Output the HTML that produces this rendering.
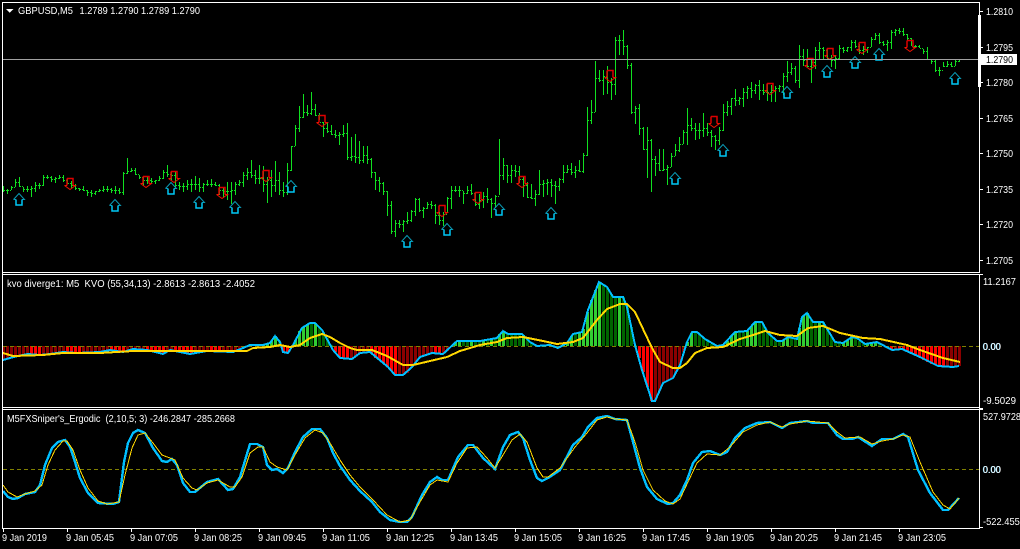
<!DOCTYPE html>
<html>
<head>
<meta charset="utf-8">
<title>GBPUSD,M5</title>
<style>
html,body{margin:0;padding:0;background:#000;width:1020px;height:549px;overflow:hidden}
svg{display:block}
text{font-family:"Liberation Sans",sans-serif;font-size:10.5px;fill:#fff;white-space:pre}
.c{shape-rendering:crispEdges;fill:none}
</style>
</head>
<body>
<svg width="1020" height="549" viewBox="0 0 1020 549" xmlns="http://www.w3.org/2000/svg">
<defs>
<g id="u" fill="none"><path d="M-5.5 6.5L0 .5 5.5 6.5H3M-5.5 6.5H-3" stroke="#0a9ab5"/><path d="M-3 6.5V12H3V6.5" stroke="#00c8f5" stroke-width="1.5"/></g>
<g id="d" fill="none"><path d="M-3 .5H3V7.5M-3 .5V7.5" stroke="#dd0000" stroke-width="1.5"/><path d="M-5.5 7.5H-3M3 7.5H5.5L0 11.5-5.5 7.5" stroke="#ee1100"/></g>
</defs>

<!-- main price bars -->
<path class="c" stroke="#10e020" d="M3.5 186V192M7.5 189V194M11.5 186V190M15.5 179V187M19.5 177V187M23.5 187V192M27.5 186V192M31.5 186V197M35.5 182V192M39.5 183V189M43.5 175V186M47.5 175V179M51.5 176V182M55.5 177V183M59.5 175V179M63.5 175V182M67.5 178V184M71.5 181V188M75.5 184V190M79.5 188V191M83.5 186V191M87.5 190V196M91.5 190V197M95.5 191V195M99.5 189V192M103.5 186V192M107.5 186V192M111.5 188V193M115.5 186V194M119.5 188V194M123.5 172V195M127.5 158V174M131.5 168V172M135.5 168V175M139.5 175V179M143.5 176V186M147.5 176V184M151.5 178V184M155.5 180V184M159.5 176V181M163.5 170V179M167.5 165V177M171.5 172V180M175.5 172V187M179.5 182V190M183.5 183V192M187.5 180V190M191.5 179V192M195.5 176V190M199.5 178V192M203.5 183V192M207.5 180V186M211.5 179V187M215.5 182V186M219.5 184V195M223.5 188V198M227.5 182V200M231.5 182V204M235.5 182V195M239.5 180V186M243.5 172V187M247.5 168V180M251.5 160V178M255.5 170V184M259.5 165V184M263.5 166V192M267.5 177V203M271.5 170V197M275.5 161V192M279.5 172V195M283.5 182V197M287.5 163V195M291.5 146V171M295.5 125V146M299.5 106V132M303.5 94V118M307.5 105V116M311.5 92V115M315.5 104V116M319.5 113V120M323.5 122V137M327.5 122V133M331.5 125V135M335.5 130V138M339.5 132V145M343.5 125V137M347.5 123V160M351.5 137V161M355.5 134V163M359.5 141V164M363.5 146V163M367.5 146V164M371.5 158V178M375.5 172V190M379.5 177V192M383.5 182V195M387.5 191V216M391.5 201V234M395.5 220V237M399.5 220V228M403.5 220V232M407.5 212V224M411.5 210V222M415.5 198V216M419.5 198V212M423.5 207V218M427.5 202V209M431.5 201V209M435.5 204V224M439.5 212V225M443.5 212V226M447.5 197V213M451.5 186V209M455.5 186V192M459.5 186V197M463.5 191V204M467.5 186V194M471.5 184V195M475.5 193V206M479.5 194V209M483.5 192V208M487.5 188V203M491.5 198V218M495.5 195V208M499.5 139V195M503.5 158V180M507.5 165V183M511.5 165V183M515.5 165V177M519.5 166V183M523.5 177V197M527.5 182V198M531.5 184V199M535.5 190V206M539.5 170V195M543.5 180V197M547.5 179V195M551.5 179V197M555.5 181V204M559.5 178V191M563.5 165V183M567.5 165V173M571.5 163V175M575.5 166V178M579.5 160V172M583.5 153V173M587.5 107V156M591.5 100V124M595.5 61V112M599.5 70V82M603.5 70V95M607.5 66V94M611.5 78V100M615.5 37V95M619.5 35V55M623.5 30V55M627.5 45V69M631.5 63V114M635.5 106V124M639.5 104V135M643.5 127V150M647.5 127V178M651.5 139V192M655.5 156V176M659.5 149V171M663.5 149V171M667.5 165V185M671.5 153V167M675.5 144V156M679.5 137V152M683.5 130V144M687.5 108V145M691.5 118V131M695.5 123V140M699.5 123V139M703.5 113V137M707.5 123V136M711.5 130V147M715.5 135V150M719.5 127V145M723.5 104V131M727.5 101V116M731.5 98V115M735.5 89V106M739.5 97V105M743.5 88V107M747.5 86V99M751.5 82V98M755.5 84V94M759.5 80V100M763.5 84V95M767.5 84V101M771.5 85V102M775.5 86V102M779.5 85V92M783.5 73V95M787.5 61V82M791.5 63V75M795.5 66V83M799.5 45V88M803.5 49V66M807.5 49V67M811.5 58V83M815.5 47V69M819.5 42V59M823.5 47V59M827.5 48V60M831.5 55V67M835.5 55V69M839.5 45V59M843.5 47V53M847.5 47V52M851.5 40V51M855.5 40V48M859.5 44V54M863.5 46V55M867.5 47V53M871.5 37V47M875.5 33V40M879.5 33V44M883.5 41V46M887.5 40V51M891.5 30V49M895.5 29V36M899.5 28V34M903.5 28V36M907.5 34V40M911.5 38V46M915.5 45V48M919.5 45V48M923.5 49V54M927.5 47V59M931.5 59V64M935.5 60V72M939.5 67V76M943.5 62V67M947.5 61V67M951.5 62V67M955.5 59V66M959.5 59V62"/>
<path class="c" stroke="#10e020" stroke-dasharray="1 1" d="M4 190.5h3M8 190.5h3M12 187.5h3M16 182.5h3M20 186.5h3M24 189.5h3M28 189.5h3M32 188.5h3M36 185.5h3M40 185.5h3M44 177.5h3M48 177.5h3M52 179.5h3M56 178.5h3M60 177.5h3M64 180.5h3M68 183.5h3M72 185.5h3M76 188.5h3M80 189.5h3M84 190.5h3M88 192.5h3M92 193.5h3M96 191.5h3M100 190.5h3M104 189.5h3M108 189.5h3M112 190.5h3M116 190.5h3M120 192.5h3M124 173.5h3M128 171.5h3M132 170.5h3M136 174.5h3M140 177.5h3M144 180.5h3M148 180.5h3M152 181.5h3M156 180.5h3M160 178.5h3M164 172.5h3M168 174.5h3M172 175.5h3M176 185.5h3M180 186.5h3M184 186.5h3M188 184.5h3M192 184.5h3M196 184.5h3M200 187.5h3M204 184.5h3M208 184.5h3M212 184.5h3M216 185.5h3M220 190.5h3M224 191.5h3M228 191.5h3M232 190.5h3M236 184.5h3M240 182.5h3M244 175.5h3M248 172.5h3M252 175.5h3M256 178.5h3M260 178.5h3M264 184.5h3M268 180.5h3M272 185.5h3M276 180.5h3M280 190.5h3M284 192.5h3M288 170.5h3M292 146.5h3M296 128.5h3M300 117.5h3M304 112.5h3M308 113.5h3M312 109.5h3M316 115.5h3M320 122.5h3M324 128.5h3M328 131.5h3M332 134.5h3M336 135.5h3M340 134.5h3M344 133.5h3M348 157.5h3M352 156.5h3M356 157.5h3M360 160.5h3M364 155.5h3M368 159.5h3M372 172.5h3M376 180.5h3M380 183.5h3M384 191.5h3M388 205.5h3M392 231.5h3M396 223.5h3M400 224.5h3M404 221.5h3M408 220.5h3M412 211.5h3M416 199.5h3M420 210.5h3M424 208.5h3M428 204.5h3M432 205.5h3M436 215.5h3M440 220.5h3M444 214.5h3M448 198.5h3M452 190.5h3M456 190.5h3M460 190.5h3M464 193.5h3M468 190.5h3M472 193.5h3M476 204.5h3M480 200.5h3M484 196.5h3M488 199.5h3M492 203.5h3M496 196.5h3M500 175.5h3M504 165.5h3M508 175.5h3M512 170.5h3M516 171.5h3M520 179.5h3M524 185.5h3M528 197.5h3M532 198.5h3M536 194.5h3M540 184.5h3M544 183.5h3M548 182.5h3M552 185.5h3M556 186.5h3M560 179.5h3M564 172.5h3M568 169.5h3M572 172.5h3M576 170.5h3M580 171.5h3M584 155.5h3M588 120.5h3M592 112.5h3M596 78.5h3M600 80.5h3M604 76.5h3M608 82.5h3M612 84.5h3M616 40.5h3M620 40.5h3M624 46.5h3M628 65.5h3M632 112.5h3M636 108.5h3M640 128.5h3M644 149.5h3M648 140.5h3M652 159.5h3M656 163.5h3M660 170.5h3M664 169.5h3M668 167.5h3M672 156.5h3M676 150.5h3M680 144.5h3M684 132.5h3M688 125.5h3M692 128.5h3M696 130.5h3M700 130.5h3M704 128.5h3M708 132.5h3M712 136.5h3M716 140.5h3M720 130.5h3M724 112.5h3M728 106.5h3M732 98.5h3M736 100.5h3M740 98.5h3M744 92.5h3M748 88.5h3M752 90.5h3M756 85.5h3M760 90.5h3M764 92.5h3M768 92.5h3M772 90.5h3M776 88.5h3M780 86.5h3M784 76.5h3M788 72.5h3M792 68.5h3M796 80.5h3M800 56.5h3M804 60.5h3M808 66.5h3M812 62.5h3M816 50.5h3M820 48.5h3M824 50.5h3M828 58.5h3M832 60.5h3M836 58.5h3M840 48.5h3M844 50.5h3M848 47.5h3M852 42.5h3M856 46.5h3M860 50.5h3M864 49.5h3M868 47.5h3M872 39.5h3M876 35.5h3M880 42.5h3M884 44.5h3M888 42.5h3M892 32.5h3M896 30.5h3M900 31.5h3M904 34.5h3M908 38.5h3M912 46.5h3M916 46.5h3M920 48.5h3M924 51.5h3M928 59.5h3M932 61.5h3M936 70.5h3M940 70.5h3M944 66.5h3M948 64.5h3M952 66.5h3M956 61.5h3"/>

<!-- arrows -->
<use href="#u" x="19" y="193"/><use href="#u" x="115" y="199"/><use href="#u" x="171" y="182"/><use href="#u" x="199" y="196"/><use href="#u" x="235" y="201"/><use href="#u" x="291" y="180"/><use href="#u" x="407" y="235"/><use href="#u" x="447" y="223"/><use href="#u" x="499" y="203"/><use href="#u" x="551" y="207"/><use href="#u" x="675" y="172"/><use href="#u" x="723" y="144"/><use href="#u" x="787" y="86"/><use href="#u" x="827" y="65"/><use href="#u" x="855" y="56"/><use href="#u" x="879" y="48"/><use href="#u" x="955" y="72"/>
<use href="#d" x="70" y="178"/><use href="#d" x="146" y="176"/><use href="#d" x="174" y="171"/><use href="#d" x="222" y="187"/><use href="#d" x="266" y="170"/><use href="#d" x="322" y="115"/><use href="#d" x="442" y="205"/><use href="#d" x="478" y="192"/><use href="#d" x="522" y="176"/><use href="#d" x="610" y="70"/><use href="#d" x="714" y="116"/><use href="#d" x="770" y="83"/><use href="#d" x="810" y="58"/><use href="#d" x="830" y="48"/><use href="#d" x="862" y="42"/><use href="#d" x="910" y="40"/>

<!-- current price line -->
<path class="c" stroke="#a0a0a0" d="M3 59.5H983"/>

<!-- KVO histogram -->
<g class="c" stroke-width="3">
<path stroke="#8b0000" d="M3.5 346V360M7.5 346V359M11.5 346V358M15.5 346V357M19.5 346V356M23.5 346V355M27.5 346V354M43.5 346V355M47.5 346V354M51.5 346V354M55.5 346V353M59.5 346V352M63.5 346V352M83.5 346V352M87.5 346V352M91.5 346V352M95.5 346V352M99.5 346V352M103.5 346V351M107.5 346V350M127.5 346V350M131.5 346V349M135.5 346V349M139.5 346V349M143.5 346V350M167.5 346V352M171.5 346V350M195.5 346V353M199.5 346V352M203.5 346V351M207.5 346V351M223.5 346V352M227.5 346V352M231.5 346V352M235.5 346V352M239.5 346V349M243.5 346V348M291.5 346V348M351.5 346V359M355.5 346V356M359.5 346V353M363.5 346V352M367.5 346V352M399.5 346V375M403.5 346V375M407.5 346V373M411.5 346V368M415.5 346V362M419.5 346V357M423.5 346V356M427.5 346V354M431.5 346V353M443.5 346V354M447.5 346V351M451.5 346V347M655.5 346V401M659.5 346V391M663.5 346V383M667.5 346V381M671.5 346V379M675.5 346V374M679.5 346V365M683.5 346V352M895.5 346V350M947.5 346V367M951.5 346V367M955.5 346V367M959.5 346V366"/>
<path stroke="#ff0000" d="M31.5 346V354M35.5 346V354M39.5 346V355M67.5 346V353M71.5 346V353M75.5 346V353M79.5 346V353M111.5 346V350M115.5 346V351M119.5 346V352M123.5 346V352M147.5 346V350M151.5 346V351M155.5 346V352M159.5 346V353M163.5 346V354M175.5 346V351M179.5 346V352M183.5 346V353M187.5 346V354M191.5 346V354M211.5 346V351M215.5 346V352M219.5 346V352M283.5 346V352M287.5 346V353M335.5 346V352M339.5 346V357M343.5 346V358M347.5 346V359M371.5 346V353M375.5 346V358M379.5 346V360M383.5 346V363M387.5 346V367M391.5 346V371M395.5 346V375M435.5 346V353M439.5 346V354M555.5 346V347M559.5 346V348M639.5 346V358M643.5 346V372M647.5 346V387M651.5 346V401M887.5 346V347M891.5 346V350M899.5 346V349M903.5 346V350M907.5 346V351M911.5 346V353M915.5 346V355M919.5 346V357M923.5 346V360M927.5 346V362M931.5 346V364M935.5 346V365M939.5 346V366M943.5 346V367"/>
<path stroke="#32cd32" d="M251.5 346V345M263.5 346V345M267.5 346V344M271.5 346V341M275.5 346V336M295.5 346V340M299.5 346V331M303.5 346V327M307.5 346V324M315.5 346V323M455.5 346V342M459.5 346V341M471.5 346V341M483.5 346V340M491.5 346V339M499.5 346V334M503.5 346V331M523.5 346V335M547.5 346V345M551.5 346V345M563.5 346V345M567.5 346V343M571.5 346V336M579.5 346V332M583.5 346V329M587.5 346V312M591.5 346V300M595.5 346V290M599.5 346V282M619.5 346V297M687.5 346V342M691.5 346V333M719.5 346V345M723.5 346V345M727.5 346V341M731.5 346V336M735.5 346V332M747.5 346V331M751.5 346V326M755.5 346V322M783.5 346V340M787.5 346V338M799.5 346V328M803.5 346V316M807.5 346V313M819.5 346V322M843.5 346V343M847.5 346V340M851.5 346V337M867.5 346V344M871.5 346V343M875.5 346V342"/>
<path stroke="#006400" d="M255.5 346V345M259.5 346V345M279.5 346V341M311.5 346V323M319.5 346V327M323.5 346V332M327.5 346V338M331.5 346V345M463.5 346V341M467.5 346V341M475.5 346V341M479.5 346V341M487.5 346V340M495.5 346V338M507.5 346V333M511.5 346V334M515.5 346V334M519.5 346V334M527.5 346V339M531.5 346V343M535.5 346V345M575.5 346V333M603.5 346V285M607.5 346V288M611.5 346V294M615.5 346V297M623.5 346V297M627.5 346V307M631.5 346V327M635.5 346V345M695.5 346V332M699.5 346V335M703.5 346V338M707.5 346V341M711.5 346V344M739.5 346V331M743.5 346V331M759.5 346V322M763.5 346V324M767.5 346V332M771.5 346V337M775.5 346V341M779.5 346V341M791.5 346V337M795.5 346V339M811.5 346V320M815.5 346V322M823.5 346V322M827.5 346V329M831.5 346V337M835.5 346V342M839.5 346V343M855.5 346V338M859.5 346V341M863.5 346V343M879.5 346V343M883.5 346V345"/>
</g>
<path class="c" stroke="#808000" stroke-dasharray="4 3" d="M3 346.5H979M3 469.5H979"/>

<!-- KVO blue and signal -->
<path class="c" stroke="#00bfff" stroke-width="2" d="M3 360L10 358 18 356 28 354 40 355 50 354 63 352 77 353 100 352 110 350 123 352 133 349 147 350 163 354 170 350 190 354 207 351 233 352 243 348 250 345 263 345 270 343 275 336 280 342 283 352 288 353 293 345 302 328 310 323 315 323 322 330 333 350 340 358 352 359 360 353 370 352 382 362 388 367 395 375 403 375 412 367 420 357 432 353 443 354 457 341 480 341 497 338 503 331 508 334 522 334 530 342 537 346 550 345 558 348 567 343 573 334 582 332 588 310 599 282 607 287 613 297 623 297 627 307 635 345 642 370 652 401 655 401 663 383 673 378 680 365 687 342 692 332 697 332 705 339 717 346 723 345 735 332 747 331 755 322 762 322 768 333 777 341 782 341 788 337 797 339 802 317 807 313 813 322 823 322 835 342 843 343 852 337 857 338 865 344 877 342 892 350 902 349 920 357 938 366 953 367 959 366"/>
<path class="c" stroke="#ffd700" stroke-width="2" d="M3 353L13 356 43 355 63 353 100 353 133 351 173 351 207 351 247 351 253 348 270 347 280 345 290 347 300 345 310 338 322 334 330 337 340 343 350 348 357 350 372 350 387 356 403 365 413 365 447 357 460 351 480 345 497 342 507 338 523 337 543 341 557 344 573 342 583 338 597 320 607 309 620 304 627 304 635 312 652 348 660 362 673 368 680 368 687 363 695 353 707 348 723 347 740 339 753 335 765 331 780 335 797 336 808 328 823 326 840 333 863 338 880 339 907 345 920 350 943 358 960 362"/>

<!-- Ergodic -->
<path class="c" stroke="#00bfff" stroke-width="2.4" d="M3 491L8 497 13 499 18 498 25 494 35 492 40 485 45 465 52 448 58 442 65 440 70 447 75 462 80 478 88 493 98 503 113 504 119 502 124 462 128 443 133 433 138 430 145 433 153 448 162 461 167 462 172 459 177 465 183 483 190 492 195 492 207 482 218 479 228 490 233 489 240 477 250 444 257 444 263 447 267 465 272 470 277 469 283 473 288 468 295 452 303 437 312 429 320 429 327 438 333 453 340 466 343 470 350 480 360 491 372 502 380 512 390 520 400 522 407 522 412 517 422 495 430 482 437 477 442 480 448 480 458 457 468 445 473 445 483 458 495 469 503 447 510 435 518 432 523 438 530 460 537 478 542 481 548 478 560 470 573 445 582 437 588 427 597 418 607 416 615 419 627 420 633 442 640 468 647 487 657 499 668 504 673 503 680 495 687 480 693 463 702 452 710 451 720 455 727 452 735 438 745 428 757 423 770 422 782 428 790 423 807 421 813 423 828 423 837 435 843 439 852 439 858 437 872 446 882 439 893 439 903 434 908 437 918 470 930 493 943 510 948 510 959 498"/>
<path class="c" stroke="#ffd700" d="M3 485L8 492 17 497 25 494 35 491 42 485 48 465 55 450 63 441 67 441 73 450 80 470 88 488 98 501 107 504 119 502 125 475 132 448 138 435 145 433 153 443 162 455 170 458 175 460 183 478 192 488 197 490 207 483 218 480 230 487 235 487 242 477 250 453 258 447 263 447 270 462 277 467 287 470 295 455 305 438 315 430 323 433 330 443 340 460 350 475 360 487 373 500 387 515 400 522 410 520 420 502 430 485 437 480 448 482 457 463 467 448 477 447 487 458 495 468 503 455 512 440 520 434 527 442 537 468 543 477 548 477 560 468 575 447 587 433 597 420 607 417 615 419 627 420 635 442 643 470 653 490 665 501 673 504 680 499 688 482 697 463 707 454 720 455 730 447 743 432 757 425 770 422 782 427 790 424 807 421 828 423 837 432 845 438 860 437 872 444 882 441 893 439 903 435 910 437 920 462 933 492 943 505 950 509 959 498"/>

<!-- frames -->
<path class="c" stroke="#fff" d="M2 2.5H979.5V272.5H2M2.5 2V529M2 274.5H979.5V407.5H2M2 409.5H979.5V528.5H2M979.5 274V529"/>
<path class="c" stroke="#fff" stroke-width="3" d="M979.5 15V87"/>
<path class="c" stroke="#fff" d="M980 11.5h3M980 47.5h3M980 82.5h3M980 118.5h3M980 153.5h3M980 189.5h3M980 224.5h3M980 260.5h3M980 274.5h3M980 408.5h3M980 409.5h3M980 527.5h3M3.5 529v3M67.5 529v3M131.5 529v3M195.5 529v3M259.5 529v3M323.5 529v3M387.5 529v3M451.5 529v3M515.5 529v3M579.5 529v3M643.5 529v3M707.5 529v3M771.5 529v3M835.5 529v3M899.5 529v3"/>
<rect x="981" y="54" width="36" height="11" fill="#fff"/>
<path fill="#fff" d="M6 9H13.5L9.7 12.7Z"/>

<!-- price scale -->
<text x="986" y="15" textLength="27" lengthAdjust="spacingAndGlyphs">1.2810</text>
<text x="986" y="51" textLength="27" lengthAdjust="spacingAndGlyphs">1.2795</text>
<text x="986" y="63" textLength="27" lengthAdjust="spacingAndGlyphs" style="fill:#000">1.2790</text>
<text x="986" y="86" textLength="27" lengthAdjust="spacingAndGlyphs">1.2780</text>
<text x="986" y="122" textLength="27" lengthAdjust="spacingAndGlyphs">1.2765</text>
<text x="986" y="157" textLength="27" lengthAdjust="spacingAndGlyphs">1.2750</text>
<text x="986" y="193" textLength="27" lengthAdjust="spacingAndGlyphs">1.2735</text>
<text x="986" y="228" textLength="27" lengthAdjust="spacingAndGlyphs">1.2720</text>
<text x="986" y="264" textLength="27" lengthAdjust="spacingAndGlyphs">1.2705</text>

<!-- titles -->
<text x="18" y="14" textLength="55" lengthAdjust="spacingAndGlyphs">GBPUSD,M5</text>
<text x="79.5" y="14" textLength="120.5" lengthAdjust="spacingAndGlyphs">1.2789 1.2790 1.2789 1.2790</text>
<text x="7" y="287" textLength="248" lengthAdjust="spacingAndGlyphs">kvo diverge1: M5  KVO (55,34,13) -2.8613 -2.8613 -2.4052</text>
<text x="7" y="422" textLength="228" lengthAdjust="spacingAndGlyphs">M5FXSniper's_Ergodic  (2,10,5; 3) -246.2847 -285.2668</text>

<!-- indicator scales -->
<text x="983" y="285" textLength="33" lengthAdjust="spacingAndGlyphs">11.2167</text>
<text x="982.5" y="350" textLength="18" lengthAdjust="spacingAndGlyphs" style="fill:#6fd8ff">0.00</text>
<text x="983" y="350" textLength="18" lengthAdjust="spacingAndGlyphs">0.00</text>
<text x="983" y="404" textLength="33" lengthAdjust="spacingAndGlyphs">-9.5029</text>
<text x="983" y="420" textLength="38" lengthAdjust="spacingAndGlyphs">527.9728</text>
<text x="982.5" y="473" textLength="18" lengthAdjust="spacingAndGlyphs" style="fill:#6fd8ff">0.00</text>
<text x="983" y="473" textLength="18" lengthAdjust="spacingAndGlyphs">0.00</text>
<text x="983" y="525" textLength="42" lengthAdjust="spacingAndGlyphs">-522.4559</text>

<!-- time axis -->
<text x="2" y="541" textLength="45" lengthAdjust="spacingAndGlyphs">9 Jan 2019</text>
<text x="66" y="541" textLength="48" lengthAdjust="spacingAndGlyphs">9 Jan 05:45</text>
<text x="130" y="541" textLength="48" lengthAdjust="spacingAndGlyphs">9 Jan 07:05</text>
<text x="194" y="541" textLength="48" lengthAdjust="spacingAndGlyphs">9 Jan 08:25</text>
<text x="258" y="541" textLength="48" lengthAdjust="spacingAndGlyphs">9 Jan 09:45</text>
<text x="322" y="541" textLength="48" lengthAdjust="spacingAndGlyphs">9 Jan 11:05</text>
<text x="386" y="541" textLength="48" lengthAdjust="spacingAndGlyphs">9 Jan 12:25</text>
<text x="450" y="541" textLength="48" lengthAdjust="spacingAndGlyphs">9 Jan 13:45</text>
<text x="514" y="541" textLength="48" lengthAdjust="spacingAndGlyphs">9 Jan 15:05</text>
<text x="578" y="541" textLength="48" lengthAdjust="spacingAndGlyphs">9 Jan 16:25</text>
<text x="642" y="541" textLength="48" lengthAdjust="spacingAndGlyphs">9 Jan 17:45</text>
<text x="706" y="541" textLength="48" lengthAdjust="spacingAndGlyphs">9 Jan 19:05</text>
<text x="770" y="541" textLength="48" lengthAdjust="spacingAndGlyphs">9 Jan 20:25</text>
<text x="834" y="541" textLength="48" lengthAdjust="spacingAndGlyphs">9 Jan 21:45</text>
<text x="898" y="541" textLength="48" lengthAdjust="spacingAndGlyphs">9 Jan 23:05</text>
</svg>
</body>
</html>
